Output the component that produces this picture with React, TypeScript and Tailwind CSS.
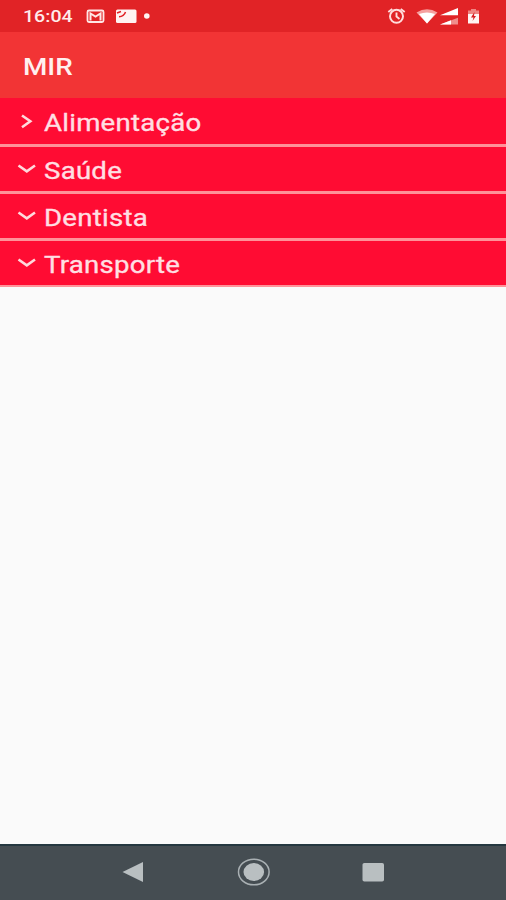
const categories = [
  { name: "Alimentação", open: false, row: "h-[49px] border-b-[3px]" },
  { name: "Saúde", open: true, row: "h-[47px] border-b-[3px]" },
  { name: "Dentista", open: true, row: "h-[47px] border-b-[3px]" },
  { name: "Transporte", open: true, row: "h-[46px] border-b-2" },
];

function Chevron({ open }: { open: boolean }) {
  return (
    <svg className="h-[22px] w-[22px] shrink-0" viewBox="0 0 22 22" fill="none" stroke="#ffd9dc" strokeWidth="2.6">
      <path d={open ? "M2.500 7.500 L10.800 13.300 L19 7.500" : "M6 5.500 L14.300 11.300 L6 17.200"} />
    </svg>
  );
}

function StatusBar() {
  return (
    <header className="flex h-8 shrink-0 items-center bg-[#e12326] pl-[23px]">
      <span className="w-[63px]">
        <span className="inline-block origin-left scale-x-[1.15] text-[17px] leading-8 font-medium text-[#ffeceb]">16:04</span>
      </span>
      <svg className="h-8 w-[70px]" viewBox="86 0 70 32" fill="none">
        <rect x="87.500" y="10.500" width="16" height="11.500" rx="1.500" stroke="#ffe6e5" strokeWidth="1.800" />
        <path d="M90.500 20.500 V13.500 L95.500 16.500 L100.500 13.500 V20.500" stroke="#ffe6e5" strokeWidth="2" />
        <rect x="116" y="9.500" width="20.500" height="13.500" rx="1.500" fill="#fff3f2" />
        <path d="M117 13 L121 11.500 M119 16.800 Q124 16.500 125.500 12" stroke="#e12326" strokeWidth="1.500" />
        <circle cx="146.800" cy="16" r="2.800" fill="#fff3f2" />
      </svg>
      <svg className="mr-[20px] ml-auto h-8 w-[100px]" viewBox="386 0 100 32" fill="none">
        <circle cx="396.500" cy="16.300" r="6.500" stroke="#ffdddc" strokeWidth="2" />
        <path d="M388.300 12 L392.300 9 M404.700 12 L400.700 9 M396.500 12.500 V16.500 L399.500 19" stroke="#ffdddc" strokeWidth="1.900" />
        <path d="M416.500 12.500 Q427 6 437.500 12.500 L427 23.500 Z" fill="#f5a09f" />
        <path d="M419 14 Q427 11 435 14 L427 23.500 Z" fill="#fff" />
        <path d="M440 15.300 L458 8 V15.300 Z" fill="#fff" />
        <path d="M440 24.500 L458 17.800 V24.500 Z" fill="#f08d8c" />
        <path d="M440 24.500 L451 20.200 V24.500 Z" fill="#fff" />
        <path d="M468 10.500 H471 V9 H476 V10.500 H479 V15 H468 Z" fill="#ef8582" />
        <path d="M468 14 H479 V23.500 H468 Z" fill="#fff3f2" />
        <path d="M474.500 12 L471 17.500 H473.500 L472.500 21 L476 16 H474 Z" fill="#d51c20" />
      </svg>
    </header>
  );
}

export default function App() {
  return (
    <div className="flex h-[900px] w-[506px] flex-col overflow-hidden bg-[#fafafa] font-[Roboto,sans-serif]">
      <StatusBar />
      <div className="flex h-[66px] shrink-0 items-center bg-[#f23435] pt-[3px] pl-[23px]">
        <h1 className="origin-left scale-x-[1.16] text-[24px] leading-8 font-medium text-[#fff0ef]">MIR</h1>
      </div>
      <ul>
        {categories.map((c) => (
          <li key={c.name} className={"flex items-center border-[#ff9299] bg-[#ff0c33] pl-4 " + c.row}>
            <Chevron open={c.open} />
            <span className="ml-1.5 origin-left scale-x-[1.2] pt-[5px] text-[23px] leading-8 tracking-[0.2px] text-[#ffdfe2] [-webkit-text-stroke:0.35px_#ffdfe2]">{c.name}</span>
          </li>
        ))}
      </ul>
      <nav className="mt-auto h-[56px] shrink-0 border-t-2 border-[#253840] bg-[#454d52]">
        <svg className="h-[54px] w-full" viewBox="0 846 506 54" fill="none">
          <path d="M122.500 872 L143 862 V882 Z" fill="#b9bfc1" />
          <ellipse cx="253.800" cy="872" rx="15.300" ry="12.800" stroke="#a9b0b3" strokeWidth="1.500" />
          <ellipse cx="253.800" cy="872" rx="10.300" ry="9" fill="#b9bfc1" />
          <rect x="362.500" y="863" width="21.500" height="18.500" rx="1.800" fill="#b9bfc1" />
        </svg>
      </nav>
    </div>
  );
}
